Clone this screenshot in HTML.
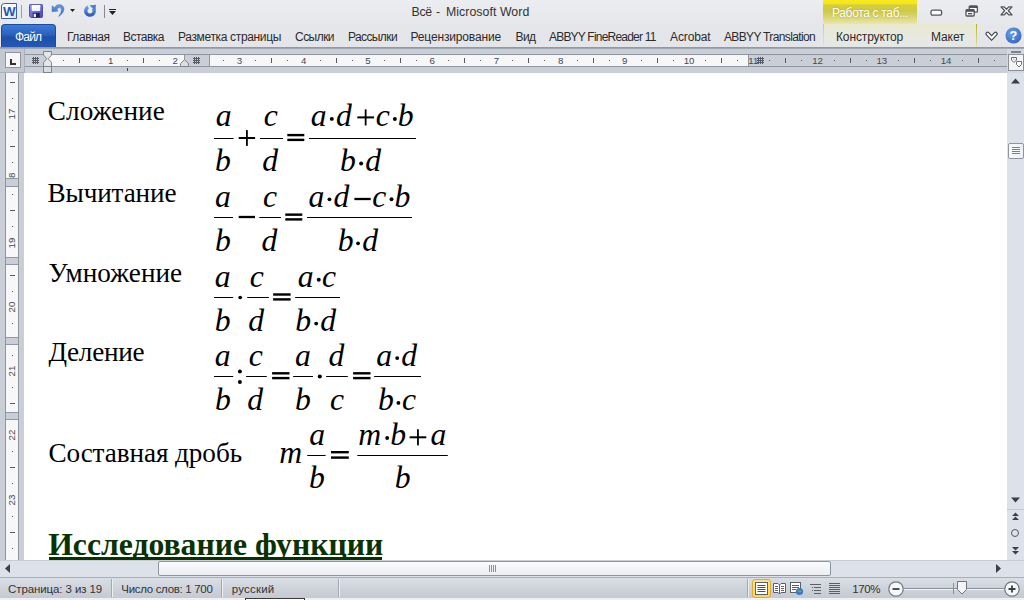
<!DOCTYPE html><html><head><meta charset="utf-8"><title>Word</title><style>
*{margin:0;padding:0;box-sizing:border-box}
html,body{width:1024px;height:600px;overflow:hidden;background:#fff}
body{position:relative;font-family:"Liberation Sans",sans-serif;font-size:12px;color:#1e1e1e}
.abs{position:absolute}
#title{left:0;top:0;width:1024px;height:24px;background:linear-gradient(#ebedf0,#e5e7ea)}
#tabs{left:0;top:24px;width:1024px;height:23px;background:linear-gradient(#e5e7ea,#e3e5e9)}
.tab{position:absolute;top:25.8px;height:23px;line-height:23px;font-size:12px;color:#2b2b2b;white-space:nowrap}
#file{left:1px;top:24px;width:55px;height:23px;border-radius:4px 4px 0 0;background:linear-gradient(#3c7bd6 0%,#2a61bd 45%,#1f50a8 55%,#2458b3 100%);border:1px solid #1c4a9e;border-bottom:none}
#file span{position:absolute;left:0;width:53px;text-align:center;top:0.8px;line-height:22px;color:#fff;font-size:12px;letter-spacing:-0.8px;text-indent:-0.8px}
#rul{left:0;top:47px;width:1024px;height:26px;background:#c9ced7}
#doc{left:24px;top:73px;width:983px;height:487px;background:#fff}
.t{position:absolute;font-family:"Liberation Serif",serif;font-size:27.2px;line-height:30px;white-space:nowrap;color:#000}
.m{transform-origin:0 28.5px;transform:scaleY(.98);position:absolute;font-family:"Liberation Serif",serif;font-style:italic;font-size:31.7px;line-height:36px;white-space:nowrap;color:#000}
.o{position:absolute;font-family:"Liberation Serif",serif;font-size:31.7px;line-height:36px;white-space:nowrap;color:#000}
.bar{position:absolute;height:1px;background:#000}
.rn{position:absolute;font-size:9.7px;line-height:12px;color:#454a54;width:20px;text-align:center;top:54.6px}
.vn{position:absolute;font-size:9.7px;line-height:12px;color:#454a54;width:20px;height:12px;text-align:center;left:2px;transform:rotate(-90deg)}
.sb{position:absolute;font-size:11.5px;line-height:14px;color:#333;white-space:nowrap;top:581.5px}
</style></head><body>
<div id="title" class="abs"></div>
<div class="abs" style="left:411.6px;top:4px;font-size:12.3px;line-height:16px;color:#333;white-space:nowrap;letter-spacing:-0.365px">Всё</div>
<div class="abs" style="left:436.0px;top:4px;font-size:12.3px;line-height:16px;color:#333;white-space:nowrap;letter-spacing:0.000px">-</div>
<div class="abs" style="left:446.0px;top:4px;font-size:12.3px;line-height:16px;color:#333;white-space:nowrap;letter-spacing:0.059px">Microsoft Word</div>
<div id="tabs" class="abs"></div>
<div class="abs" style="left:823px;top:0;width:94px;height:24px;background:linear-gradient(#f7e91c 0,#f5e61a 16%,#d6cf3c 20%,#cfc944 45%,#dcd878 75%,#e8e6b0 100%)"></div>
<div class="abs" style="left:823px;top:24px;width:154px;height:23px;background:linear-gradient(#e9e8cf,#e8e9e2 60%,#e5e7e6);border-left:1px solid #e6e0a8;border-right:1px solid #e6e0a8"></div>
<div class="abs" style="left:832px;top:4.5px;font-size:12px;line-height:16px;color:#fff;white-space:nowrap;letter-spacing:-0.332px;text-shadow:0 0 2px #a8a030" id="ctx">Работа с таб...</div>
<div id="file" class="abs"><span>Файл</span></div>
<div class="tab" id="tb0" style="left:67.0px;letter-spacing:-0.453px">Главная</div>
<div class="tab" id="tb1" style="left:123.0px;letter-spacing:-0.515px">Вставка</div>
<div class="tab" id="tb2" style="left:178.0px;letter-spacing:-0.345px">Разметка страницы</div>
<div class="tab" id="tb3" style="left:295.0px;letter-spacing:-0.541px">Ссылки</div>
<div class="tab" id="tb4" style="left:348.0px;letter-spacing:-0.607px">Рассылки</div>
<div class="tab" id="tb5" style="left:410.5px;letter-spacing:-0.154px">Рецензирование</div>
<div class="tab" id="tb6" style="left:515.5px;letter-spacing:-0.570px">Вид</div>
<div class="tab" id="tb7" style="left:549.0px;letter-spacing:-0.796px">ABBYY FineReader 11</div>
<div class="tab" id="tb8" style="left:670.0px;letter-spacing:-0.122px">Acrobat</div>
<div class="tab" id="tb9" style="left:724.0px;letter-spacing:-0.638px">ABBYY Translation</div>
<div class="tab" id="tb10" style="left:836.0px;letter-spacing:-0.129px">Конструктор</div>
<div class="tab" id="tb11" style="left:931.0px;letter-spacing:-0.092px">Макет</div>
<div id="rul" class="abs"></div>
<div class="abs" style="left:0;top:47px;width:1024px;height:2px;background:linear-gradient(#8b919b,#aab0ba)"></div>
<div class="abs" style="left:24px;top:54px;width:983px;height:13px;background:#c9ced7;border-top:1px solid #8f96a1;border-bottom:1px solid #8f96a1"></div>
<div class="abs" style="left:48px;top:54px;width:136px;height:13px;background:#f7f7f7;border-top:1px solid #8f96a1;border-bottom:1px solid #8f96a1"></div>
<div class="abs" style="left:209px;top:54px;width:539px;height:13px;background:#f7f7f7;border-top:1px solid #8f96a1;border-bottom:1px solid #8f96a1"></div>
<div class="abs" style="left:184px;top:55px;width:1px;height:11px;background:#8f96a1"></div>
<div class="abs" style="left:209px;top:55px;width:1px;height:11px;background:#8f96a1"></div>
<div class="abs" style="left:748px;top:55px;width:1px;height:11px;background:#8f96a1"></div>
<div class="abs" style="left:63px;top:60px;width:1px;height:1px;background:#555a63"></div>
<div class="abs" style="left:79px;top:58px;width:1px;height:5px;background:#555a63"></div>
<div class="abs" style="left:95px;top:60px;width:1px;height:1px;background:#555a63"></div>
<div class="rn" style="left:100.8px">1</div>
<div class="abs" style="left:127px;top:60px;width:1px;height:1px;background:#555a63"></div>
<div class="abs" style="left:143px;top:58px;width:1px;height:5px;background:#555a63"></div>
<div class="abs" style="left:159px;top:60px;width:1px;height:1px;background:#555a63"></div>
<div class="rn" style="left:165.1px">2</div>
<div class="abs" style="left:223px;top:60px;width:1px;height:1px;background:#555a63"></div>
<div class="rn" style="left:229.4px">3</div>
<div class="abs" style="left:255px;top:60px;width:1px;height:1px;background:#555a63"></div>
<div class="abs" style="left:271px;top:58px;width:1px;height:5px;background:#555a63"></div>
<div class="abs" style="left:287px;top:60px;width:1px;height:1px;background:#555a63"></div>
<div class="rn" style="left:293.6px">4</div>
<div class="abs" style="left:320px;top:60px;width:1px;height:1px;background:#555a63"></div>
<div class="abs" style="left:336px;top:58px;width:1px;height:5px;background:#555a63"></div>
<div class="abs" style="left:352px;top:60px;width:1px;height:1px;background:#555a63"></div>
<div class="rn" style="left:357.9px">5</div>
<div class="abs" style="left:384px;top:60px;width:1px;height:1px;background:#555a63"></div>
<div class="abs" style="left:400px;top:58px;width:1px;height:5px;background:#555a63"></div>
<div class="abs" style="left:416px;top:60px;width:1px;height:1px;background:#555a63"></div>
<div class="rn" style="left:422.1px">6</div>
<div class="abs" style="left:448px;top:60px;width:1px;height:1px;background:#555a63"></div>
<div class="abs" style="left:464px;top:58px;width:1px;height:5px;background:#555a63"></div>
<div class="abs" style="left:480px;top:60px;width:1px;height:1px;background:#555a63"></div>
<div class="rn" style="left:486.4px">7</div>
<div class="abs" style="left:512px;top:60px;width:1px;height:1px;background:#555a63"></div>
<div class="abs" style="left:528px;top:58px;width:1px;height:5px;background:#555a63"></div>
<div class="abs" style="left:544px;top:60px;width:1px;height:1px;background:#555a63"></div>
<div class="rn" style="left:550.6px">8</div>
<div class="abs" style="left:577px;top:60px;width:1px;height:1px;background:#555a63"></div>
<div class="abs" style="left:593px;top:58px;width:1px;height:5px;background:#555a63"></div>
<div class="abs" style="left:609px;top:60px;width:1px;height:1px;background:#555a63"></div>
<div class="rn" style="left:614.8px">9</div>
<div class="abs" style="left:641px;top:60px;width:1px;height:1px;background:#555a63"></div>
<div class="abs" style="left:657px;top:58px;width:1px;height:5px;background:#555a63"></div>
<div class="abs" style="left:673px;top:60px;width:1px;height:1px;background:#555a63"></div>
<div class="rn" style="left:679.1px">10</div>
<div class="abs" style="left:705px;top:60px;width:1px;height:1px;background:#555a63"></div>
<div class="abs" style="left:721px;top:58px;width:1px;height:5px;background:#555a63"></div>
<div class="abs" style="left:737px;top:60px;width:1px;height:1px;background:#555a63"></div>
<div class="rn" style="left:743.3px">11</div>
<div class="abs" style="left:769px;top:60px;width:1px;height:1px;background:#555a63"></div>
<div class="abs" style="left:785px;top:58px;width:1px;height:5px;background:#555a63"></div>
<div class="abs" style="left:801px;top:60px;width:1px;height:1px;background:#555a63"></div>
<div class="rn" style="left:807.6px">12</div>
<div class="abs" style="left:834px;top:60px;width:1px;height:1px;background:#555a63"></div>
<div class="abs" style="left:850px;top:58px;width:1px;height:5px;background:#555a63"></div>
<div class="abs" style="left:866px;top:60px;width:1px;height:1px;background:#555a63"></div>
<div class="rn" style="left:871.8px">13</div>
<div class="abs" style="left:898px;top:60px;width:1px;height:1px;background:#555a63"></div>
<div class="abs" style="left:914px;top:58px;width:1px;height:5px;background:#555a63"></div>
<div class="abs" style="left:930px;top:60px;width:1px;height:1px;background:#555a63"></div>
<div class="rn" style="left:936.1px">14</div>
<div class="abs" style="left:962px;top:60px;width:1px;height:1px;background:#555a63"></div>
<div class="abs" style="left:978px;top:58px;width:1px;height:5px;background:#555a63"></div>
<div class="abs" style="left:994px;top:60px;width:1px;height:1px;background:#555a63"></div>
<svg class="abs" style="left:32px;top:57px" width="7" height="7" viewBox="0 0 7 7"><path d="M0 1.5H7M0 3.5H7M0 5.5H7M1.5 0V7M3.5 0V7M5.5 0V7" stroke="#555a63" stroke-width="1" fill="none" shape-rendering="crispEdges"/></svg>
<svg class="abs" style="left:193px;top:57px" width="7" height="7" viewBox="0 0 7 7"><path d="M0 1.5H7M0 3.5H7M0 5.5H7M1.5 0V7M3.5 0V7M5.5 0V7" stroke="#555a63" stroke-width="1" fill="none" shape-rendering="crispEdges"/></svg>
<svg class="abs" style="left:757px;top:57px" width="7" height="7" viewBox="0 0 7 7"><path d="M0 1.5H7M0 3.5H7M0 5.5H7M1.5 0V7M3.5 0V7M5.5 0V7" stroke="#555a63" stroke-width="1" fill="none" shape-rendering="crispEdges"/></svg>
<svg class="abs" style="left:43px;top:51px" width="9" height="22" viewBox="0 0 9 22"><path d="M0.5 0.5H8.5V4L5.2 7.7L8.5 11.5V15.5H0.5V11.5L3.8 7.7L0.5 4Z" fill="#e6e6e6" stroke="#7f858f"/><rect x="0.5" y="15.5" width="8" height="6" fill="#dcdcdc" stroke="#7f858f"/></svg>
<svg class="abs" style="left:180px;top:59px" width="9" height="8" viewBox="0 0 9 8"><path d="M0.5 7.5V4.5L4.5 0.7L8.5 4.5V7.5Z" fill="#dedede" stroke="#7f858f"/></svg>
<div class="abs" style="left:127px;top:68px;width:1px;height:3px;background:#444"></div>
<div class="abs" style="left:0;top:49px;width:25px;height:24px;background:#c3c8d1;border-right:1px solid #aab0ba;border-bottom:1px solid #aab0ba"></div>
<div class="abs" style="left:5px;top:52px;width:16px;height:16px;background:#f7f7f7;border:1px solid #8f96a1"></div>
<div class="abs" style="left:10px;top:58.7px;width:2px;height:5.8px;background:#333"></div><div class="abs" style="left:10px;top:62.5px;width:5.6px;height:2px;background:#333"></div>
<div class="abs" style="left:0;top:73px;width:24px;height:487px;background:#c9ced7"></div>
<div class="abs" style="left:5px;top:73px;width:14px;height:487px;background:#f7f7f7;border-left:1px solid #8f96a1;border-right:1px solid #8f96a1"></div>
<div class="abs" style="left:10px;top:82px;width:5px;height:1px;background:#555a63"></div>
<div class="abs" style="left:12px;top:98px;width:1px;height:1px;background:#555a63"></div>
<div class="vn" style="top:108.0px">17</div>
<div class="abs" style="left:12px;top:130px;width:1px;height:1px;background:#555a63"></div>
<div class="abs" style="left:10px;top:146px;width:5px;height:1px;background:#555a63"></div>
<div class="abs" style="left:12px;top:162px;width:1px;height:1px;background:#555a63"></div>
<div class="vn" style="top:172.2px">18</div>
<div class="abs" style="left:12px;top:194px;width:1px;height:1px;background:#555a63"></div>
<div class="abs" style="left:10px;top:210px;width:5px;height:1px;background:#555a63"></div>
<div class="abs" style="left:12px;top:226px;width:1px;height:1px;background:#555a63"></div>
<div class="vn" style="top:236.5px">19</div>
<div class="abs" style="left:10px;top:275px;width:5px;height:1px;background:#555a63"></div>
<div class="abs" style="left:12px;top:291px;width:1px;height:1px;background:#555a63"></div>
<div class="vn" style="top:300.8px">20</div>
<div class="abs" style="left:12px;top:323px;width:1px;height:1px;background:#555a63"></div>
<div class="abs" style="left:12px;top:355px;width:1px;height:1px;background:#555a63"></div>
<div class="vn" style="top:365.0px">21</div>
<div class="abs" style="left:12px;top:387px;width:1px;height:1px;background:#555a63"></div>
<div class="abs" style="left:10px;top:403px;width:5px;height:1px;background:#555a63"></div>
<div class="vn" style="top:429.2px">22</div>
<div class="abs" style="left:12px;top:451px;width:1px;height:1px;background:#555a63"></div>
<div class="abs" style="left:10px;top:467px;width:5px;height:1px;background:#555a63"></div>
<div class="abs" style="left:12px;top:483px;width:1px;height:1px;background:#555a63"></div>
<div class="vn" style="top:493.5px">23</div>
<div class="abs" style="left:12px;top:516px;width:1px;height:1px;background:#555a63"></div>
<div class="abs" style="left:10px;top:532px;width:5px;height:1px;background:#555a63"></div>
<div class="abs" style="left:12px;top:548px;width:1px;height:1px;background:#555a63"></div>
<div class="abs" style="left:6px;top:178px;width:12px;height:9px;background:#c9ced7;border-top:1px solid #8f96a1;border-bottom:1px solid #8f96a1"></div>
<div class="abs" style="left:6px;top:257px;width:12px;height:8px;background:#c9ced7;border-top:1px solid #8f96a1;border-bottom:1px solid #8f96a1"></div>
<div class="abs" style="left:6px;top:337px;width:12px;height:8px;background:#c9ced7;border-top:1px solid #8f96a1;border-bottom:1px solid #8f96a1"></div>
<div class="abs" style="left:6px;top:412px;width:12px;height:8px;background:#c9ced7;border-top:1px solid #8f96a1;border-bottom:1px solid #8f96a1"></div>
<div id="doc" class="abs"></div>
<div class="t" style="left:47.80px;top:96.42px;letter-spacing:0.1px">Сложение</div>
<div class="t" style="left:47.60px;top:177.82px;letter-spacing:-0.15px">Вычитание</div>
<div class="t" style="left:48.60px;top:258.42px;letter-spacing:0.05px">Умножение</div>
<div class="t" style="left:48.40px;top:337.32px;letter-spacing:-0.25px">Деление</div>
<div class="t" style="left:48.40px;top:438.42px;letter-spacing:-0.08px">Составная дробь</div>
<div class="t" style="left:48.2px;top:526.60px;font-size:31.7px;line-height:36px;font-weight:bold;color:#0a3200" id="hd">Исследование функции</div>
<div class="abs" style="left:48.5px;top:556.5px;width:333.5px;height:3px;background:#0a3200"></div>
<div class="m" style="left:215.70px;top:97.50px">a</div>
<div class="m" style="left:215.12px;top:142.50px">b</div>
<div class="m" style="left:263.72px;top:97.50px">c</div>
<div class="m" style="left:262.30px;top:142.50px">d</div>
<div class="m" style="left:310.70px;top:97.50px">a</div>
<div class="m" style="left:336.00px;top:97.50px">d</div>
<div class="m" style="left:375.72px;top:97.50px">c</div>
<div class="m" style="left:397.82px;top:97.50px">b</div>
<div class="m" style="left:340.12px;top:142.50px">b</div>
<div class="m" style="left:365.20px;top:142.50px">d</div>
<div class="m" style="left:214.90px;top:178.50px">a</div>
<div class="m" style="left:215.12px;top:222.50px">b</div>
<div class="m" style="left:263.02px;top:178.50px">c</div>
<div class="m" style="left:261.60px;top:222.50px">d</div>
<div class="m" style="left:308.40px;top:178.50px">a</div>
<div class="m" style="left:333.60px;top:178.50px">d</div>
<div class="m" style="left:372.32px;top:178.50px">c</div>
<div class="m" style="left:394.52px;top:178.50px">b</div>
<div class="m" style="left:337.82px;top:222.50px">b</div>
<div class="m" style="left:362.30px;top:222.50px">d</div>
<div class="m" style="left:214.70px;top:258.50px">a</div>
<div class="m" style="left:214.72px;top:302.50px">b</div>
<div class="m" style="left:249.72px;top:258.50px">c</div>
<div class="m" style="left:248.20px;top:302.50px">d</div>
<div class="m" style="left:297.70px;top:258.50px">a</div>
<div class="m" style="left:322.12px;top:258.50px">c</div>
<div class="m" style="left:295.32px;top:302.50px">b</div>
<div class="m" style="left:320.30px;top:302.50px">d</div>
<div class="m" style="left:214.70px;top:337.50px">a</div>
<div class="m" style="left:214.92px;top:381.50px">b</div>
<div class="m" style="left:248.72px;top:337.50px">c</div>
<div class="m" style="left:247.20px;top:381.50px">d</div>
<div class="m" style="left:294.90px;top:337.50px">a</div>
<div class="m" style="left:295.02px;top:381.50px">b</div>
<div class="m" style="left:328.50px;top:337.50px">d</div>
<div class="m" style="left:330.02px;top:381.50px">c</div>
<div class="m" style="left:376.30px;top:337.50px">a</div>
<div class="m" style="left:401.30px;top:337.50px">d</div>
<div class="m" style="left:378.12px;top:381.50px">b</div>
<div class="m" style="left:402.12px;top:381.50px">c</div>
<div class="m" style="left:279.25px;top:434.50px">m</div>
<div class="m" style="left:309.20px;top:416.50px">a</div>
<div class="m" style="left:309.12px;top:459.50px">b</div>
<div class="m" style="left:358.35px;top:416.50px">m</div>
<div class="m" style="left:390.32px;top:416.50px">b</div>
<div class="m" style="left:430.40px;top:416.50px">a</div>
<div class="m" style="left:394.72px;top:459.50px">b</div>
<svg class="abs" style="left:0;top:0" width="1024" height="600" fill="#000"><rect x="214.00" y="138.00" width="19.60" height="1.00"/><rect x="238.70" y="137.00" width="16.40" height="2.00"/><rect x="246.00" y="130.10" width="1.80" height="15.80"/><rect x="260.00" y="138.00" width="23.00" height="1.00"/><rect x="287.30" y="133.90" width="17.00" height="2.40"/><rect x="287.30" y="138.70" width="17.00" height="2.40"/><rect x="309.00" y="138.00" width="107.00" height="1.00"/><circle cx="331.80" cy="118.90" r="1.95"/><rect x="357.30" y="116.40" width="16.70" height="2.00"/><rect x="364.75" y="109.35" width="1.80" height="16.10"/><circle cx="394.85" cy="118.90" r="2.00"/><circle cx="361.15" cy="163.60" r="2.00"/><rect x="214.00" y="217.00" width="19.00" height="1.00"/><rect x="238.70" y="215.85" width="16.30" height="2.30"/><rect x="259.30" y="217.00" width="21.70" height="1.00"/><rect x="285.30" y="213.45" width="17.00" height="2.40"/><rect x="285.30" y="218.20" width="17.00" height="2.40"/><rect x="307.00" y="217.00" width="105.00" height="1.00"/><circle cx="329.45" cy="199.30" r="1.90"/><rect x="354.40" y="197.85" width="16.30" height="2.30"/><circle cx="391.50" cy="199.30" r="1.95"/><circle cx="358.05" cy="243.30" r="1.90"/><rect x="214.00" y="297.00" width="19.20" height="1.00"/><circle cx="240.20" cy="297.50" r="1.85"/><rect x="247.20" y="297.00" width="21.70" height="1.00"/><rect x="273.10" y="293.30" width="17.50" height="2.40"/><rect x="273.10" y="298.20" width="17.50" height="2.40"/><rect x="295.10" y="297.00" width="44.90" height="1.00"/><circle cx="318.75" cy="279.80" r="2.00"/><circle cx="316.20" cy="323.60" r="1.95"/><rect x="214.00" y="376.00" width="19.20" height="1.00"/><circle cx="239.90" cy="371.40" r="2.00"/><circle cx="239.90" cy="381.90" r="2.00"/><rect x="246.10" y="376.00" width="20.70" height="1.00"/><rect x="272.10" y="372.10" width="17.40" height="2.40"/><rect x="272.10" y="376.90" width="17.40" height="2.40"/><rect x="293.10" y="376.00" width="19.90" height="1.00"/><circle cx="319.80" cy="376.50" r="2.05"/><rect x="326.10" y="376.00" width="21.70" height="1.00"/><rect x="353.10" y="372.10" width="17.40" height="2.40"/><rect x="353.10" y="376.90" width="17.40" height="2.40"/><rect x="374.10" y="376.00" width="46.90" height="1.00"/><circle cx="397.20" cy="358.10" r="1.95"/><circle cx="398.40" cy="402.90" r="1.95"/><rect x="307.20" y="455.00" width="18.40" height="1.00"/><rect x="331.00" y="451.00" width="17.80" height="2.40"/><rect x="331.00" y="456.40" width="17.80" height="2.40"/><rect x="357.30" y="455.00" width="90.50" height="1.00"/><circle cx="387.15" cy="438.00" r="1.90"/><rect x="409.60" y="436.30" width="16.70" height="2.00"/><rect x="417.05" y="429.25" width="1.80" height="16.10"/></svg>
<div class="abs" style="left:1007.00px;top:73.00px;width:17.00px;height:487.00px;background:#dde1e9"></div>
<div class="abs" style="left:1007.00px;top:49.00px;width:17.00px;height:24.00px;background:#d3d7df"></div>
<div class="abs" style="left:1011.00px;top:51.00px;width:10.00px;height:2.00px;background:#7d838d"></div>
<div class="abs" style="left:1008px;top:54px;width:16px;height:17px;background:#f4f4f4;border:1px solid #8a909a"></div>
<svg class="abs" style="left:1010px;top:56px" width="13" height="13" viewBox="0 0 13 13"><path d="M1.5 1.5H6.5V4L4 6.5L1.5 4Z" fill="#fff" stroke="#6b717b" stroke-width="1"/><path d="M6.5 5.5H11.5V8.5L9 11L6.5 8.5Z" fill="#fff" stroke="#6b717b" stroke-width="1"/><path d="M3 2.5L7 6" stroke="#d9a0a0" stroke-width="1"/></svg>
<svg class="abs" style="left:0;top:0;pointer-events:none" width="1024" height="600"><polygon points="1011.0,83.5 1020.0,83.5 1015.5,78.5" fill="#3c3f45"/></svg>
<svg class="abs" style="left:0;top:0;pointer-events:none" width="1024" height="600"><polygon points="1011.0,497.5 1020.0,497.5 1015.5,502.5" fill="#3c3f45"/></svg>
<div class="abs" style="left:1008px;top:143px;width:16px;height:16px;background:linear-gradient(90deg,#fbfbfc,#eceef2);border:1px solid #8f959f;border-radius:2px"></div>
<div class="abs" style="left:1012.00px;top:147.00px;width:8.00px;height:1.00px;background:#7c828c"></div>
<div class="abs" style="left:1012.00px;top:149.00px;width:8.00px;height:1.00px;background:#7c828c"></div>
<div class="abs" style="left:1012.00px;top:151.00px;width:8.00px;height:1.00px;background:#7c828c"></div>
<div class="abs" style="left:1012.00px;top:153.00px;width:8.00px;height:1.00px;background:#7c828c"></div>
<div class="abs" style="left:1007.00px;top:509.00px;width:17.00px;height:1.00px;background:#c3c8d1"></div>
<svg class="abs" style="left:1011px;top:512px" width="9" height="9" viewBox="0 0 9 9"><path d="M1 4L4.5 0.5L8 4ZM1 8L4.5 4.5L8 8Z" fill="#3c3f45"/></svg>
<div class="abs" style="left:1011px;top:529px;width:8px;height:8px;border:1.4px solid #555a63;border-radius:50%"></div>
<svg class="abs" style="left:1011px;top:546px" width="9" height="9" viewBox="0 0 9 9"><path d="M1 1L4.5 4.5L8 1ZM1 5L4.5 8.5L8 5Z" fill="#3c3f45"/></svg>
<div class="abs" style="left:0.00px;top:560.00px;width:1024.00px;height:17.00px;background:#dde1e9"></div>
<div class="abs" style="left:0.00px;top:560.00px;width:1024.00px;height:1.00px;background:#c9cdd6"></div>
<svg class="abs" style="left:0;top:0;pointer-events:none" width="1024" height="600"><polygon points="10.0,564.0 10.0,573.0 5.0,568.5" fill="#3c3f45"/></svg>
<svg class="abs" style="left:0;top:0;pointer-events:none" width="1024" height="600"><polygon points="996.0,564.0 996.0,573.0 1001.0,568.5" fill="#3c3f45"/></svg>
<div class="abs" style="left:158px;top:561px;width:673px;height:15px;background:linear-gradient(#fbfbfc,#eceef2);border:1px solid #8f959f;border-radius:2px"></div>
<div class="abs" style="left:489.00px;top:565.00px;width:1.00px;height:7.00px;background:#8a909a"></div>
<div class="abs" style="left:491.00px;top:565.00px;width:1.00px;height:7.00px;background:#8a909a"></div>
<div class="abs" style="left:493.00px;top:565.00px;width:1.00px;height:7.00px;background:#8a909a"></div>
<div class="abs" style="left:495.00px;top:565.00px;width:1.00px;height:7.00px;background:#8a909a"></div>
<div class="abs" style="left:0;top:577px;width:1024px;height:21px;background:linear-gradient(#d9dde4,#cfd3db 50%,#c4c9d2);border-top:1px solid #a9afb9"></div>
<div class="abs" style="left:0.00px;top:598.00px;width:1024.00px;height:2.00px;background:#eef0f3"></div>
<div class="sb" style="left:8.1px;letter-spacing:-0.105px">Страница: 3 из 19</div>
<div class="sb" style="left:121.3px;letter-spacing:-0.314px">Число слов: 1 700</div>
<div class="sb" style="left:231.8px;letter-spacing:0.205px">русский</div>
<div class="abs" style="left:111.00px;top:579.00px;width:1.00px;height:18.00px;background:#a3a9b3"></div>
<div class="abs" style="left:112.00px;top:579.00px;width:1.00px;height:18.00px;background:#eceef2"></div>
<div class="abs" style="left:221.00px;top:579.00px;width:1.00px;height:18.00px;background:#a3a9b3"></div>
<div class="abs" style="left:222.00px;top:579.00px;width:1.00px;height:18.00px;background:#eceef2"></div>
<div class="abs" style="left:338.00px;top:579.00px;width:1.00px;height:18.00px;background:#a3a9b3"></div>
<div class="abs" style="left:339.00px;top:579.00px;width:1.00px;height:18.00px;background:#eceef2"></div>
<div class="abs" style="left:747.00px;top:579.00px;width:1.00px;height:18.00px;background:#a3a9b3"></div>
<div class="abs" style="left:748.00px;top:579.00px;width:1.00px;height:18.00px;background:#eceef2"></div>
<div class="abs" style="left:752px;top:579px;width:19px;height:19px;background:linear-gradient(#fde58b,#fbd45c);border:1px solid #e2a934;border-radius:3px"></div>
<svg class="abs" style="left:755px;top:582px" width="13" height="13" viewBox="0 0 13 13"><rect x="0.5" y="0.5" width="12" height="12" fill="#fff" stroke="#5a5f68"/><path d="M2.5 3.5H10.5M2.5 5.5H10.5M2.5 7.5H10.5M2.5 9.5H10.5" stroke="#4a4f58"/></svg>
<svg class="abs" style="left:773px;top:582px" width="13" height="13" viewBox="0 0 13 13"><path d="M0.5 1.5H5L6.5 3L8 1.5H12.5V10.5H8L6.5 12L5 10.5H0.5Z" fill="#fff" stroke="#5a5f68"/><path d="M6.5 3V12M2 4.5H5M2 6.5H5M2 8.5H5M8 4.5H11M8 6.5H11M8 8.5H11" stroke="#5a5f68"/></svg>
<svg class="abs" style="left:790px;top:582px" width="14" height="14" viewBox="0 0 14 14"><rect x="0.5" y="0.5" width="10" height="10" fill="#fff" stroke="#5a5f68"/><path d="M2 3.5H9M2 5.5H9M2 7.5H6" stroke="#5a5f68"/><circle cx="9.5" cy="9.5" r="3.6" fill="#3c78c8"/><path d="M7.5 9C8.5 8 10 10.5 11.5 9" stroke="#5db35d" stroke-width="1.6" fill="none"/></svg>
<svg class="abs" style="left:810px;top:583px" width="11" height="11" viewBox="0 0 11 11"><path d="M0 1.5H11M4 4.5H11M2 4.5H3M4 7.5H11M2 7.5H3M4 10.5H11" stroke="#5a5f68"/></svg>
<svg class="abs" style="left:829px;top:583px" width="11" height="11" viewBox="0 0 11 11"><path d="M0 0.5H11M0 2.5H11M0 4.5H11M0 6.5H11M0 8.5H11M0 10.5H11" stroke="#5a5f68"/></svg>
<div class="sb" style="left:852.3px;letter-spacing:-0.453px">170%</div>
<div class="abs" style="left:904.00px;top:588.00px;width:101.00px;height:1.00px;background:#8a909a"></div>
<div class="abs" style="left:904.00px;top:589.00px;width:101.00px;height:1.00px;background:#f2f3f5"></div>
<div class="abs" style="left:953.00px;top:583.00px;width:1.00px;height:11.00px;background:#8a909a"></div>
<svg class="abs" style="left:888px;top:580.5px" width="16" height="16" viewBox="0 0 16 16"><circle cx="8" cy="8" r="7.2" fill="#f6f7f9" stroke="#6f7580" stroke-width="1.2"/><path d="M4.5 8H11.5" stroke="#3a3e45" stroke-width="1.8" fill="none"/></svg>
<svg class="abs" style="left:1004px;top:580.5px" width="16" height="16" viewBox="0 0 16 16"><circle cx="8" cy="8" r="7.2" fill="#f6f7f9" stroke="#6f7580" stroke-width="1.2"/><path d="M4.5 8H11.5M8 4.5V11.5" stroke="#3a3e45" stroke-width="1.8" fill="none"/></svg>
<svg class="abs" style="left:957px;top:581px" width="11" height="14" viewBox="0 0 11 14"><path d="M0.5 0.5H9.5V8.5L5 13L0.5 8.5Z" fill="#f4f5f7" stroke="#6f7580"/></svg>
<svg class="abs" style="left:1px;top:3px" width="17" height="17" viewBox="0 0 17 17"><defs><linearGradient id="wg" x1="0" y1="0" x2="1" y2="1"><stop offset="0" stop-color="#ffffff"/><stop offset=".6" stop-color="#f4f8fe"/><stop offset="1" stop-color="#c9daf4"/></linearGradient></defs><path d="M0.5 3Q0.5 0.5 3.5 0.5H15.5V15.5H0.5Z" fill="url(#wg)" stroke="#3f5f9e"/><text x="8.2" y="13.2" font-family="Liberation Sans" font-weight="bold" font-size="13" fill="#1c5ab8" text-anchor="middle" textLength="12.6" lengthAdjust="spacingAndGlyphs">W</text></svg>
<div class="abs" style="left:21.00px;top:5.00px;width:1.00px;height:13.00px;background:#9aa0aa"></div>
<svg class="abs" style="left:29px;top:4px" width="14" height="14" viewBox="0 0 15 15"><defs><linearGradient id="sg" x1="0" y1="0" x2="1" y2="1"><stop offset="0" stop-color="#9092f0"/><stop offset="1" stop-color="#4545b2"/></linearGradient></defs><path d="M0.5 1.5Q0.5 0.5 1.5 0.5H13.5Q14.5 0.5 14.5 1.5V13.5Q14.5 14.5 13.5 14.5H2L0.5 13Z" fill="url(#sg)" stroke="#4a48a8"/><rect x="3" y="1" width="9" height="6.5" fill="#eef1f7"/><path d="M3 1H12V3.5Q8 3 3 6Z" fill="#fff"/><rect x="4" y="9.5" width="7.5" height="5" fill="#20205a"/><rect x="5" y="10.5" width="2.5" height="3.5" fill="#e8e8f0"/></svg>
<svg class="abs" style="left:51px;top:4px" width="15" height="14" viewBox="0 0 15 14"><defs><linearGradient id="ug" x1="0" y1="0" x2="0" y2="1"><stop offset="0" stop-color="#6f9be0"/><stop offset="1" stop-color="#2f5fb8"/></linearGradient></defs><path d="M1 1.7L1 7.8L7.3 6.9L5.7 5.4Q8.4 2.2 10.2 4.6Q11.2 8 7.6 12.6Q13.6 8.6 12.9 3.8Q10.6 -0.9 5.4 1.3L3.6 3.4Z" fill="url(#ug)" stroke="#3c68b8" stroke-width=".4"/></svg>
<svg class="abs" style="left:0;top:0;pointer-events:none" width="1024" height="600"><polygon points="70.0,9.0 75.0,9.0 72.5,12.0" fill="#222"/></svg>
<svg class="abs" style="left:83px;top:4px" width="15" height="14" viewBox="0 0 15 14"><path d="M5.2 3.05A4.25 4.25 0 1 0 10.2 4.1" fill="none" stroke="url(#ug)" stroke-width="3.4" stroke-linecap="butt"/><path d="M6.4 1.6L13 0.8L12.4 6.6Z" fill="#4c7cd2"/></svg>
<div class="abs" style="left:104.00px;top:5.00px;width:1.00px;height:13.00px;background:#858a94"></div>
<div class="abs" style="left:109.00px;top:8.50px;width:7.00px;height:1.50px;background:#222"></div>
<svg class="abs" style="left:0;top:0;pointer-events:none" width="1024" height="600"><polygon points="109.0,11.0 116.0,11.0 112.5,15.0" fill="#222"/></svg>
<svg class="abs" style="left:930px;top:9px" width="13" height="8" viewBox="0 0 13 8"><rect x="1" y="1.2" width="10.6" height="5" rx="1.6" fill="#fdfdfd" stroke="#50545c" stroke-width="1.3"/></svg>
<svg class="abs" style="left:964.5px;top:4.5px" width="14" height="13" viewBox="0 0 14 13"><rect x="4.2" y="1" width="8.2" height="6.2" rx="1" fill="#fdfdfd" stroke="#50545c" stroke-width="1.3"/><rect x="4.2" y="1" width="8.2" height="2" fill="#50545c"/><rect x="1" y="4.6" width="8.2" height="6.4" rx="1" fill="#fdfdfd" stroke="#50545c" stroke-width="1.3"/><rect x="1" y="4.6" width="8.2" height="2.2" fill="#50545c"/><rect x="3" y="8" width="4.2" height="1.4" fill="#50545c"/></svg>
<svg class="abs" style="left:1000px;top:6px" width="13" height="10" viewBox="0 0 13 10"><path d="M1 0.9H4.2L6.5 3.2L8.8 0.9H12L8.3 4.8L12 8.9H8.8L6.5 6.5L4.2 8.9H1L4.7 4.8Z" fill="#fdfdfd" stroke="#50545c" stroke-width="1.3" stroke-linejoin="round"/></svg>
<svg class="abs" style="left:985px;top:30px" width="13" height="11" viewBox="0 0 13 11"><path d="M2.6 3.7L6.6 8L10.6 3.7" fill="none" stroke="#3f434a" stroke-width="4.2" stroke-linecap="round" stroke-linejoin="miter"/><path d="M2.6 3.7L6.6 8L10.6 3.7" fill="none" stroke="#fdfdfd" stroke-width="2" stroke-linecap="round" stroke-linejoin="miter"/></svg>
<svg class="abs" style="left:1004.5px;top:26.5px" width="17" height="17" viewBox="0 0 18 18"><defs><radialGradient id="hg" cx=".4" cy=".35" r=".75"><stop offset="0" stop-color="#6f9ee6"/><stop offset="1" stop-color="#2f64c0"/></radialGradient></defs><circle cx="9" cy="9" r="8.5" fill="url(#hg)"/><text x="9" y="13.8" font-family="Liberation Sans" font-weight="bold" font-size="13.5" fill="#fff" text-anchor="middle">?</text></svg>
<div class="abs" style="left:976px;top:24px;width:1px;height:23px;background:linear-gradient(#b9b02c,#e3dfa6)"></div>
<div class="abs" style="left:823px;top:24px;width:1px;height:23px;background:linear-gradient(#d6cf58,#e8e5b8)"></div>
<div class="abs" style="left:245px;top:598px;width:60px;height:3px;background:#fff;border:1px solid #3a3a3a;border-bottom:none"></div>
</body></html>
